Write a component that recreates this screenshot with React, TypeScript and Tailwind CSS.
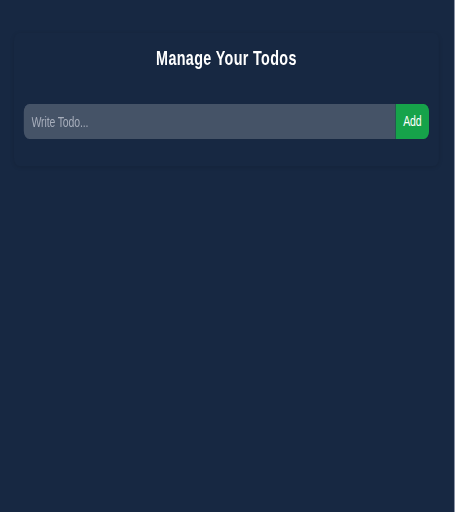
import React from "react";

export default function App() {
  return (
    <div
      className="min-h-screen w-full overflow-hidden border-r border-[#8b94a6] bg-[#172842] pt-[33px]"
      style={{ fontFamily: '"Liberation Sans", Arial, sans-serif' }}
    >
      <div className="w-[650px] origin-top-left scale-x-[0.7]">
        <div className="mx-[20px] w-[607px] rounded-lg px-[14px] pb-[27px] pt-[11px] text-white shadow-[0_1px_5px_rgba(0,0,0,0.13)]">
          <h1 className="mb-[32px] text-center text-[20.5px] font-bold leading-[28px] tracking-[0.5px]">
            Manage Your Todos
          </h1>
          <form className="flex" onSubmit={(e) => e.preventDefault()}>
            <input
              type="text"
              placeholder="Write Todo..."
              className="h-[35px] w-full rounded-l-lg bg-white/20 px-[11px] text-[15px] tracking-[-0.2px] text-white outline-none placeholder:text-[#a7aebb]"
            />
            <button
              type="submit"
              className="h-[35px] shrink-0 rounded-r-lg bg-[#16a34a] px-[11px] text-[15px] tracking-[-0.2px] text-white"
            >
              Add
            </button>
          </form>
        </div>
      </div>
    </div>
  );
}
